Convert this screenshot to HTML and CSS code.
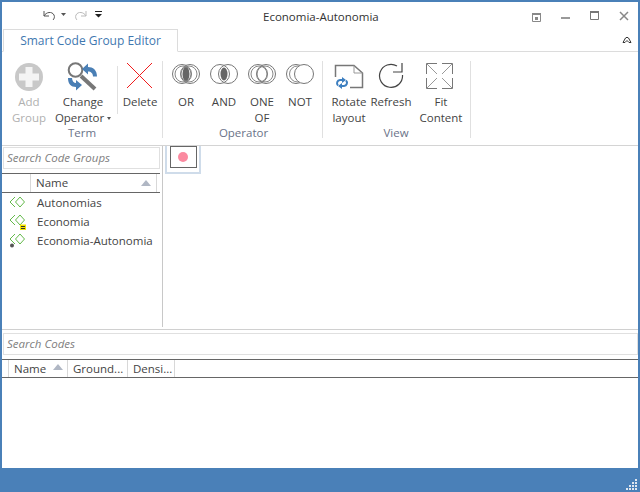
FILE: index.html
```html
<!DOCTYPE html>
<html lang="en">
<head>
<meta charset="utf-8">
<title>Economia-Autonomia</title>
<link rel="stylesheet" href="styles.css">
</head>
<body>
<div class="window">
  <header class="titlebar">
    <div class="qat">
      <svg class="qi" width="66" height="14" viewBox="0 0 66 14"><path d="M2 3v5h5M2 8c2-4 8-5 10-1 1 2 0 4-1 5" fill="none" stroke="#555" stroke-width="1"/><path d="M19 5h5l-2.500 3z" fill="#555"/><path d="M44 3v5h-5M44 8c-2-4-8-5-10-1-1 2 0 4 1 5" fill="none" stroke="#bbb" stroke-width="1"/><path d="M53 3h7v1h-7zM53 6h7l-3.500 3.500z" fill="#222"/></svg>
    </div>
    <div class="title">Economia-Autonomia</div>
    <div class="winbtns">
      <svg width="106" height="16" viewBox="0 0 106 16"><path d="M0.500 5.500h8v8h-8z" fill="none" stroke="#888"/><path d="M0 5h9v2H0zM3 9h3v3H3z" fill="#888"/><path d="M29 9h9v2h-9z" fill="#999"/><path d="M58.500 3.500h8v8h-8z" fill="none" stroke="#777"/><path d="M58 3h9v2h-9z" fill="#777"/><path d="M88 4l8 8M96 4l-8 8" stroke="#888" stroke-width="1.500"/></svg>
    </div>
  </header>
  <nav class="tabstrip">
    <div class="tab">Smart Code Group Editor</div>
    <svg class="collapse" width="10" height="8" viewBox="0 0 10 8"><path d="M1 6.500L3.500 2q1.500-1.500 3 0L9 6.500H7L5 4.500 3 6.500z" fill="none" stroke="#333"/></svg>
  </nav>
  <section class="ribbon">
    <div class="group term">
      <div class="btns">
        <div class="btn w54 off"><svg class="ico" width="30" height="32" viewBox="0 0 30 32"><circle cx="15" cy="16" r="14" fill="#c8c8c8"/><path d="M11.500 6h7v6.500H25v7h-6.500V26h-7v-6.500H5v-7h6.500z" fill="#f4f4f4"/></svg><span>Add<br>Group</span></div>
        <div class="btn w54"><svg class="ico" width="32" height="32" viewBox="0 0 32 32"><circle cx="8.500" cy="9" r="6.800" fill="none" stroke="#777" stroke-width="2"/><path d="M14 15l14 13" stroke="#777" stroke-width="4"/><path d="M15 8l6-5.500v3.500c5 0 9 3 9 9.500h-4c0-3-2-5-5-5v3z" fill="#4a7fb5"/><path d="M15 24l-6 5.500v-3.500c-5 0-8-3-8-9h4c0 3 2 5 4 5v-3z" fill="#4a7fb5"/></svg><span>Change<br>Operator <i class="caret"></i></span></div>
        <div class="sep"></div>
        <div class="btn w44"><svg class="ico" width="28" height="32" viewBox="0 -2 28 32"><path d="M1 0l25 25M26 0L1 25" stroke="#f01c1c" stroke-width="1"/></svg><span>Delete</span></div>
      </div>
      <div class="glabel">Term</div>
    </div>
    <div class="group op">
      <div class="btns">
        <div class="btn w38"><svg class="ico" width="28" height="32" viewBox="0 -3 28 32" fill="none" stroke="#777"><circle cx="10" cy="10" r="9.500"/><circle cx="18" cy="10" r="9.500"/><circle cx="11" cy="10" r="8" stroke="#888"/><circle cx="17" cy="10" r="8" stroke="#888"/><ellipse cx="14" cy="10" rx="3.500" ry="7" fill="#666" stroke="none"/></svg><span>OR</span></div>
        <div class="btn w38"><svg class="ico" width="28" height="32" viewBox="0 -3 28 32" fill="none" stroke="#777"><circle cx="10" cy="10" r="9.500"/><circle cx="18" cy="10" r="9.500"/><ellipse cx="14" cy="10" rx="3.500" ry="6.500" fill="#666" stroke="none"/></svg><span>AND</span></div>
        <div class="btn w38"><svg class="ico" width="28" height="32" viewBox="0 -3 28 32" fill="none" stroke="#777"><circle cx="10" cy="10" r="9.500"/><circle cx="18" cy="10" r="9.500"/><circle cx="11" cy="10" r="8" stroke="#888"/><circle cx="17" cy="10" r="8" stroke="#888"/></svg><span>ONE<br>OF</span></div>
        <div class="btn w38"><svg class="ico" width="28" height="32" viewBox="0 -3 28 32" fill="none" stroke="#777"><circle cx="10" cy="10" r="9.500"/><circle cx="11.500" cy="10" r="8" stroke="#888"/><circle cx="18" cy="10" r="9.500" fill="#fff"/></svg><span>NOT</span></div>
      </div>
      <div class="glabel">Operator</div>
    </div>
    <div class="group view">
      <div class="btns">
        <div class="btn w42"><svg class="ico" width="30" height="32" viewBox="0 0 30 32"><path d="M1.500 16V4.500H20l8.500 7.500V26.500H16" fill="none" stroke="#777" stroke-width="1.500"/><path d="M20 4.500v7.500h8.500" fill="none" stroke="#999"/><path d="M10 19H6a3.200 3.200 0 0 0-2 5.500M6 25h4a3.200 3.200 0 0 0 2-5.500" fill="none" stroke="#3d7fc0" stroke-width="2"/><path d="M8 16l4 3-4 3zM8 22l-4 3 4 3z" fill="#3d7fc0"/></svg><span>Rotate<br>layout</span></div>
        <div class="btn w42"><svg class="ico" width="26" height="32" viewBox="0 0 26 32" fill="none" stroke="#444" stroke-width="1.200"><path d="M19 5A11.500 11.500 0 1 0 24.500 14"/><path d="M24 2v9h-9"/></svg><span>Refresh</span></div>
        <div class="btn w58"><svg class="ico" width="30" height="32" viewBox="0 -2 30 32" fill="none" stroke="#777"><path d="M.5 11V.5H11M16 .5h10.500V11M.5 15v10.500H11M16 25.500h10.500V15"/><path d="M1 1l10 10M26 1L16 11M1 25l10-10M26 25L16 15" stroke="#999"/></svg><span>Fit<br>Content</span></div>
      </div>
      <div class="glabel">View</div>
    </div>
  </section>
  <main class="upper">
    <aside class="groups">
      <div class="search">Search Code Groups</div>
      <div class="ghead"><div class="gh-gut"></div><div class="gh-name">Name<i class="sort"></i></div></div>
      <ul class="rows">
        <li><svg width="18" height="16" viewBox="0 0 18 16" fill="none" stroke="#63b94a"><path d="M7 2L2 7l5 5M12 2L7.500 7l4.500 5 4.500-5z"/></svg>Autonomias</li>
        <li><svg width="18" height="16" viewBox="0 0 18 16" fill="none" stroke="#63b94a"><path d="M7 1L2 6l5 5M12 1L7.500 6l4.500 5 4.500-5z"/><path d="M12 10.500h6v5.500h-6z" fill="#f7e600" stroke="none"/><path d="M13 12.500h4M13 14.500h4" stroke="#333" stroke-width="1"/></svg>Economia</li>
        <li><svg width="18" height="16" viewBox="0 0 18 16" fill="none" stroke="#63b94a"><path d="M7 1L2 6l5 5M12 1L7.500 6l4.500 5 4.500-5z"/><circle cx="4" cy="12.500" r="2" fill="#555" stroke="none"/></svg>Economia-Autonomia</li>
      </ul>
    </aside>
    <div class="canvas">
      <div class="node"><div class="nodebox"><i class="dot"></i></div></div>
    </div>
  </main>
  <section class="lower">
    <div class="search wide">Search Codes</div>
    <div class="chead">
      <div class="c0"></div>
      <div class="c c1">Name<i class="sort s2"></i></div>
      <div class="c c2">Ground...</div>
      <div class="c c3">Densi...</div>
    </div>
  </section>
  <footer class="status">
    <svg width="13" height="13" viewBox="0 0 13 13" fill="#dfe6ef"><path d="M10 1h2v2h-2zM7 4h2v2H7zM10 4h2v2h-2zM4 7h2v2H4zM7 7h2v2H7zM10 7h2v2h-2zM1 10h2v2H1zM4 10h2v2H4zM7 10h2v2H7zM10 10h2v2h-2z"/></svg>
  </footer>
</div>
</body>
</html>
```
FILE: styles.css
```css
* { box-sizing: border-box; }
html, body { margin: 0; padding: 0; }
body { width: 640px; height: 492px; overflow: hidden; background: #fff; font-family: "Open Sans", "Noto Sans", sans-serif; font-size: 11.5px; color: #444; }
.window { width: 640px; height: 492px; display: flex; flex-direction: column; border: 2px solid #4a80b8; border-bottom: 0; background: #fff; }
.titlebar { height: 27px; flex: none; display: flex; align-items: center; }
.qat { width: 260px; padding-left: 40px; padding-bottom: 1px; display: flex; }
.title { flex: 1; color: #333; font-size: 11.5px; padding: 2px 0 0 1px; }
.winbtns { display: flex; }
.tabstrip { height: 23px; flex: none; display: flex; align-items: flex-end; justify-content: space-between; border-bottom: 1px solid #dcdcdc; }
.tab { margin-left: 1px; margin-bottom: -1px; height: 23px; width: 175px; border: 1px solid #dcdcdc; border-bottom: 1px solid #fff; background: #fff; color: #3f78b0; text-align: center; line-height: 21px; font-size: 12px; }
.collapse { margin: 0 6px 7px 0; }
.ribbon { height: 94px; flex: none; display: flex; border-bottom: 1px solid #d4d4d4; padding-top: 9px; }
.group { display: flex; flex-direction: column; align-items: stretch; border-right: 1px solid #e0e0e0; height: 77px; }
.term { width: 161px; }
.op { width: 160px; padding: 0 2px 0 4px; }
.view { width: 148px; padding: 0 6px 0 5px; }
.btns { display: flex; height: 64px; }
.btn { display: flex; flex: none; flex-direction: column; align-items: center; line-height: 16px; text-align: center; white-space: nowrap; }
.btn .ico { flex: none; margin-bottom: 1px; }
.btn span { display: block; }
.off { color: #b0b0b0; }
.w38 { width: 38px; }
.w42 { width: 42px; }
.w44 { width: 44px; }
.w54 { width: 54px; }
.w58 { width: 58px; }
.sep { width: 1px; height: 48px; margin: 5px 0 0 7px; background: #e0e0e0; }
.caret { display: inline-block; border: 2.500px solid transparent; border-top: 3px solid #555; border-bottom: 0; vertical-align: middle; }
.glabel { text-align: center; color: #6a7388; line-height: 15px; }
.upper { height: 184px; flex: none; display: flex; border-bottom: 1px solid #d0d0d0; }
.groups { width: 161px; height: 181px; flex: none; border-right: 1px solid #c8c8c8; padding: 1px 2px 0 0; }
.search { height: 22px; margin-left: 1px; border: 1px solid #e0e0e0; font-style: italic; color: #808080; line-height: 20px; padding-left: 3px; }
.ghead { display: flex; height: 20px; margin-top: 4px; border-top: 1px solid #666; border-bottom: 1px solid #666; line-height: 18px; color: #444; }
.gh-gut { width: 29px; border-right: 1px solid #d8d8d8; }
.gh-name { flex: 1; padding-left: 5px; position: relative; border-right: 1px solid #d8d8d8; margin-right: 3px; }
.sort { position: absolute; right: 5px; top: 6px; border: 5px solid transparent; border-bottom: 6px solid #b0b7c4; border-top: 0; }
.rows { list-style: none; margin: 0; padding: 0; }
.rows li { display: flex; align-items: center; height: 19px; padding-left: 6px; gap: 11px; color: #444; white-space: nowrap; }
.canvas { flex: 1; }
.node { width: 36px; height: 28px; margin-left: 2px; border: 2px solid #cfdcea; border-top: 0; padding: 0 3px 4px; }
.nodebox { width: 27px; height: 22px; border: 1px solid #666; padding-right: 1px; display: flex; align-items: center; justify-content: center; }
.dot { width: 10px; height: 10px; border-radius: 50%; background: #fb8aa0; }
.lower { flex: 1; padding-top: 3px; }
.search.wide { height: 22px; margin-left: 1px; }
.chead { display: flex; height: 19px; margin-top: 4px; border-top: 1px solid #666; border-bottom: 1px solid #666; line-height: 17px; color: #444; }
.c0 { width: 7px; border-right: 1px solid #d8d8d8; }
.c { border-right: 1px solid #d8d8d8; padding-left: 5px; white-space: nowrap; position: relative; }
.c1 { width: 59px; }
.c2 { width: 60px; }
.c3 { width: 47px; }
.sort.s2 { right: 4px; top: 4px; }
.status { height: 24px; flex: none; margin: 0 -2px; background: #4a80b8; display: flex; justify-content: flex-end; align-items: flex-end; padding: 0 2px 1px 0; }
```
